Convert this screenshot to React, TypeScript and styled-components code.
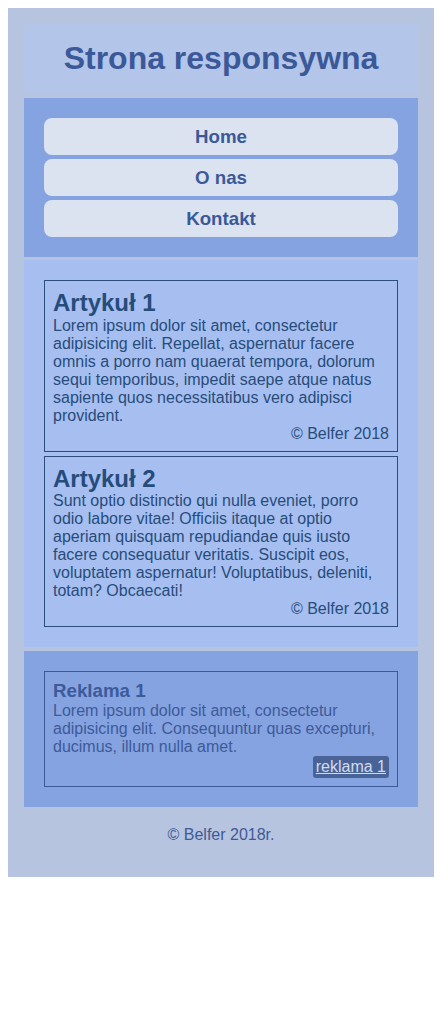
import React from "react";
import styled, { createGlobalStyle } from "styled-components";

const Global = createGlobalStyle`
  body {
    margin: 8px;
    font-family: "Liberation Sans", Arial, sans-serif;
    font-size: 16px;
    background: #ffffff;
  }
  * { box-sizing: border-box; }
`;

const Page = styled.div`
  background: #b6c4e0;
  padding: 16px 16px 16px;
  display: flex;
  flex-direction: column;
`;

const Header = styled.header`
  background: #b3c5e8;
  padding: 16px 0 17px;
  text-align: center;
  margin-bottom: 4px;
`;

const Title = styled.h1`
  margin: 0;
  font-size: 32px;
  line-height: 37px;
  font-weight: bold;
  color: #3b5998;
`;

const Nav = styled.nav`
  background: #84a3e0;
  padding: 20px;
  display: flex;
  flex-direction: column;
  gap: 4px;
  margin-bottom: 3px;
`;

const NavButton = styled.a`
  display: block;
  background: #dbe3f0;
  border-radius: 8px;
  height: 37px;
  line-height: 37px;
  text-align: center;
  font-size: 18.72px;
  font-weight: bold;
  color: #3b5998;
  text-decoration: none;
`;

const Articles = styled.main`
  background: #a6bff0;
  padding: 20px;
  display: flex;
  flex-direction: column;
  gap: 4px;
  margin-bottom: 4px;
`;

const Article = styled.article`
  border: 1px solid #2a4d7b;
  padding: 8px;
  color: #284c7a;
  line-height: 18px;
`;

const ArticleTitle = styled.h2`
  margin: 0;
  font-size: 24px;
  line-height: 27.6px;
  font-weight: bold;
  color: #254c7b;
`;

const Text = styled.p`
  margin: 0;
`;

const Signature = styled.p`
  margin: 0;
  text-align: right;
`;

const Aside = styled.aside`
  background: #84a3e0;
  padding: 20px;
`;

const Ad = styled.div`
  border: 1px solid #3b5998;
  padding: 8px;
  color: #3f5a99;
  line-height: 18px;
`;

const AdTitle = styled.h3`
  margin: 0;
  font-size: 18.72px;
  line-height: 21.5px;
  font-weight: bold;
  color: #3d5a9a;
`;

const AdLinkRow = styled.p`
  margin: 0;
  text-align: right;
  line-height: 18px;
`;

const AdLink = styled.a`
  display: inline-block;
  background: #4a6396;
  color: #d0dbf0;
  padding: 2px 3px 2px;
  border-radius: 3px;
  text-decoration: underline;
  vertical-align: top;
`;

const Footer = styled.footer`
  padding: 19px 0 17px;
  text-align: center;
  color: #3f5a95;
  line-height: 18px;
`;

const articles = [
  {
    title: "Artykuł 1",
    text: "Lorem ipsum dolor sit amet, consectetur adipisicing elit. Repellat, aspernatur facere omnis a porro nam quaerat tempora, dolorum sequi temporibus, impedit saepe atque natus sapiente quos necessitatibus vero adipisci provident.",
  },
  {
    title: "Artykuł 2",
    text: "Sunt optio distinctio qui nulla eveniet, porro odio labore vitae! Officiis itaque at optio aperiam quisquam repudiandae quis iusto facere consequatur veritatis. Suscipit eos, voluptatem aspernatur! Voluptatibus, deleniti, totam? Obcaecati!",
  },
];

export default function App() {
  return (
    <>
      <Global />
      <Page>
        <Header>
          <Title>Strona responsywna</Title>
        </Header>
        <Nav>
          <NavButton href="#">Home</NavButton>
          <NavButton href="#">O nas</NavButton>
          <NavButton href="#">Kontakt</NavButton>
        </Nav>
        <Articles>
          {articles.map((a) => (
            <Article key={a.title}>
              <ArticleTitle>{a.title}</ArticleTitle>
              <Text>{a.text}</Text>
              <Signature>© Belfer 2018</Signature>
            </Article>
          ))}
        </Articles>
        <Aside>
          <Ad>
            <AdTitle>Reklama 1</AdTitle>
            <Text>
              Lorem ipsum dolor sit amet, consectetur adipisicing elit. Consequuntur quas excepturi, ducimus, illum nulla amet.
            </Text>
            <AdLinkRow>
              <AdLink href="#">reklama 1</AdLink>
            </AdLinkRow>
          </Ad>
        </Aside>
        <Footer>© Belfer 2018r.</Footer>
      </Page>
    </>
  );
}
